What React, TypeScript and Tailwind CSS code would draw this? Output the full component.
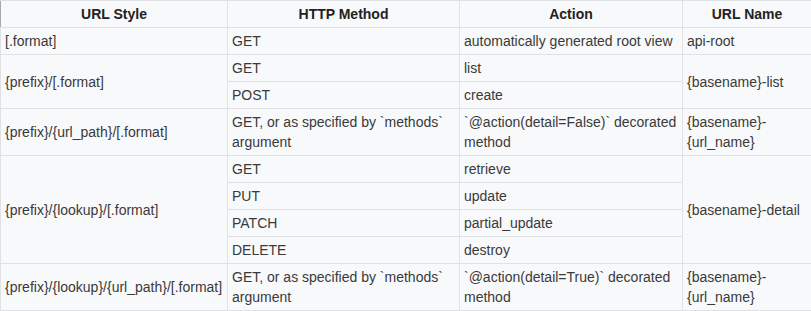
type Cell = { text: string; rowSpan?: number };

const rows: Cell[][] = [
  [{ text: "[.format]" }, { text: "GET" }, { text: "automatically generated root view" }, { text: "api-root" }],
  [{ text: "{prefix}/[.format]", rowSpan: 2 }, { text: "GET" }, { text: "list" }, { text: "{basename}-list", rowSpan: 2 }],
  [{ text: "POST" }, { text: "create" }],
  [
    { text: "{prefix}/{url_path}/[.format]" },
    { text: "GET, or as specified by `methods` argument" },
    { text: "`@action(detail=False)` decorated method" },
    { text: "{basename}-{url_name}" },
  ],
  [{ text: "{prefix}/{lookup}/[.format]", rowSpan: 4 }, { text: "GET" }, { text: "retrieve" }, { text: "{basename}-detail", rowSpan: 4 }],
  [{ text: "PUT" }, { text: "update" }],
  [{ text: "PATCH" }, { text: "partial_update" }],
  [{ text: "DELETE" }, { text: "destroy" }],
  [
    { text: "{prefix}/{lookup}/{url_path}/[.format]" },
    { text: "GET, or as specified by `methods` argument" },
    { text: "`@action(detail=True)` decorated method" },
    { text: "{basename}-{url_name}" },
  ],
];

const headers = ["URL Style", "HTTP Method", "Action", "URL Name"];

export default function App() {
  return (
    <div className="w-[811px] h-[311px] bg-white font-['Liberation_Sans',Arial,sans-serif] text-[14px] text-[#3a3a3a]">
      <table className="w-[811px] table-fixed border-collapse border border-[#a2a9b1] bg-[#f8f9fa]">
        <colgroup>
          <col className="w-[227px]" />
          <col className="w-[232px]" />
          <col className="w-[223px]" />
          <col className="w-[129px]" />
        </colgroup>
        <thead>
          <tr>
            {headers.map((h) => (
              <th
                key={h}
                className="border border-[#dfe1e4] px-[4px] py-[3px] text-center font-bold leading-[20px] text-[#222] first:border-l-[#a2a9b1] last:border-r-[#a2a9b1]"
              >
                {h}
              </th>
            ))}
          </tr>
        </thead>
        <tbody>
          {rows.map((row, i) => (
            <tr key={i}>
              {row.map((c, j) => (
                <td
                  key={j}
                  rowSpan={c.rowSpan}
                  className="border border-[#dfe1e4] px-[4px] py-[3px] align-middle leading-[20px]"
                >
                  {c.text}
                </td>
              ))}
            </tr>
          ))}
        </tbody>
      </table>
    </div>
  );
}
